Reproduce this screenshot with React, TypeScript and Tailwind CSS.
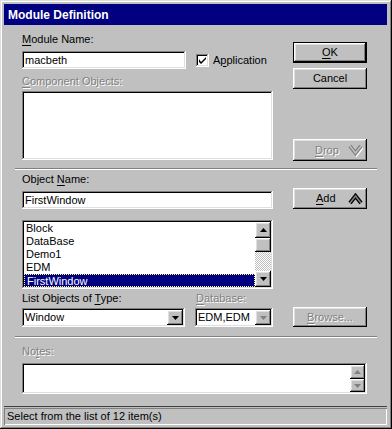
import React from 'react'

const raised =
  'shadow-[inset_-1px_-1px_#000,inset_1px_1px_#fff,inset_-2px_-2px_#808080,inset_2px_2px_#dfdfdf]'
const sunken =
  'shadow-[inset_-1px_-1px_#fff,inset_1px_1px_#808080,inset_-2px_-2px_#dfdfdf,inset_2px_2px_#000]'
const disabledText = 'text-[#808080] [text-shadow:1px_1px_0_#fff]'

function U({ children }: { children: React.ReactNode }) {
  return <span className="underline underline-offset-2">{children}</span>
}

function Chevrons({ dir, disabled }: { dir: 'up' | 'down'; disabled?: boolean }) {
  const d = dir === 'up' ? 'M2 11 L7.5 4 L13 11' : 'M2 3 L7.5 10 L13 3'
  return (
    <svg width="15" height="14" viewBox="0 0 15 14">
      {disabled && <path d={d} transform="translate(1 1)" fill="none" stroke="#fff" strokeWidth="4" />}
      <path d={d} fill="none" stroke={disabled ? '#808080' : '#000'} strokeWidth="4" />
      <path d={d} fill="none" stroke={disabled ? '#c0c0c0' : '#808080'} strokeWidth="1.4" />
    </svg>
  )
}

function Tri({ dir, color = '#000' }: { dir: 'up' | 'down'; color?: string }) {
  return (
    <svg width="7" height="4" viewBox="0 0 7 4">
      <path d={dir === 'up' ? 'M3.5 0 L7 4 L0 4 Z' : 'M0 0 L7 0 L3.5 4 Z'} fill={color} />
    </svg>
  )
}

function Combo({ value, width, disabled }: { value: string; width: string; disabled?: boolean }) {
  return (
    <div className={`${width} h-[19px] bg-white ${sunken} flex items-center p-[2px]`}>
      <span className="flex-1 pl-[1px] leading-none">{value}</span>
      <div className={`w-[16px] h-[15px] bg-[#c0c0c0] ${raised} flex items-center justify-center`}>
        <Tri dir="down" color={disabled ? '#808080' : '#000'} />
      </div>
    </div>
  )
}

export default function App() {
  const items = ['Block', 'DataBase', 'Demo1', 'EDM', 'FirstWindow']
  return (
    <div
      className="w-[392px] h-[429px] bg-[#c0c0c0] pt-[4px] pl-[4px] pr-[5px] pb-[4px] flex flex-col text-[11px] text-black shadow-[inset_-1px_-1px_#000,inset_1px_1px_#dfdfdf,inset_-2px_-2px_#808080,inset_2px_2px_#fff]"
      style={{ fontFamily: '"Liberation Sans", Arial, sans-serif' }}
    >
      <div className="h-[21px] bg-[#000080] text-white font-bold text-[12px] pl-[4px] flex items-center">
        Module Definition
      </div>

      {/* section 1 */}
      <div className="flex pl-[18px]">
        <div className="w-[251px] flex flex-col">
          <div className="mt-[8px] h-[13px] leading-[13px]">
            <U>M</U>odule Name:
          </div>
          <div className="mt-[5px] flex items-center">
            <div className={`w-[164px] h-[18px] bg-white ${sunken} pl-[3px] flex items-center leading-none`}>
              macbeth
            </div>
            <div className={`ml-[10px] w-[13px] h-[13px] bg-white ${sunken} flex items-center justify-center`}>
              <svg width="7" height="7" viewBox="0 0 7 7">
                <path d="M0 2 L0 5 L2 7 L7 2 L7 0 L2 5 Z" fill="#000" />
              </svg>
            </div>
            <span className="ml-[4px]">
              A<U>p</U>plication
            </span>
          </div>
          <div className={`mt-[6px] h-[13px] leading-[13px] ${disabledText}`}>
            <U>C</U>omponent Objects:
          </div>
          <div className={`mt-[3px] h-[69px] bg-white ${sunken}`} />
        </div>
        <div className="ml-[20px] w-[74px] flex flex-col">
          <button
            className={`mt-[17px] h-[21px] bg-[#c0c0c0] flex items-center justify-center shadow-[inset_0_0_0_1px_#000,inset_-2px_-2px_#000,inset_2px_2px_#fff,inset_-3px_-3px_#808080,inset_3px_3px_#dfdfdf]`}
          >
            <U>O</U>K
          </button>
          <button className={`mt-[5px] h-[21px] bg-[#c0c0c0] ${raised} flex items-center justify-center`}>
            Cancel
          </button>
          <button className={`mt-[50px] h-[22px] bg-[#c0c0c0] ${raised} flex items-center pl-[22px] pr-[4px]`}>
            <span className={`flex-1 text-left ${disabledText}`}>
              <U>D</U>rop
            </span>
            <Chevrons dir="down" disabled />
          </button>
        </div>
      </div>

      <div className="mt-[7px] ml-[11px] w-[362px] h-[2px] border-t border-t-[#808080] border-b border-b-white" />

      {/* section 2 */}
      <div className="flex pl-[18px]">
        <div className="w-[251px] flex flex-col">
          <div className="mt-[3px] h-[13px] leading-[13px]">
            Object <U>N</U>ame:
          </div>
          <div className={`mt-[5px] h-[18px] bg-white ${sunken} pl-[3px] flex items-center leading-none`}>
            FirstWindow
          </div>
          <div className={`mt-[11px] h-[69px] bg-white ${sunken} p-[2px] flex`}>
            <div className="flex-1 flex flex-col overflow-hidden">
              {items.map((it) => (
                <div
                  key={it}
                  className={`h-[13px] leading-[12px] pl-[2px] shrink-0 ${
                    it === 'FirstWindow'
                      ? 'bg-[#000080] text-white border border-dotted border-[#ffff80] pl-[1px]'
                      : ''
                  }`}
                >
                  {it}
                </div>
              ))}
            </div>
            <div className="w-[16px] flex flex-col">
              <div className={`h-[16px] bg-[#c0c0c0] ${raised} flex items-center justify-center`}>
                <Tri dir="up" />
              </div>
              <div className={`h-[14px] bg-[#c0c0c0] ${raised}`} />
              <div className="flex-1 bg-[repeating-conic-gradient(#c0c0c0_0%_25%,#ffffff_0%_50%)] bg-[length:2px_2px]" />
              <div className={`h-[16px] bg-[#c0c0c0] ${raised} flex items-center justify-center`}>
                <Tri dir="down" />
              </div>
            </div>
          </div>
          <div className="mt-[3px] flex">
            <div className="w-[174px] h-[13px] leading-[13px]">
              List Objects of <U>T</U>ype:
            </div>
            <div className={`h-[13px] leading-[13px] ${disabledText}`}>
              <U>D</U>atabase:
            </div>
          </div>
          <div className="mt-[3px] flex">
            <Combo value="Window" width="w-[164px]" />
            <div className="ml-[10px]">
              <Combo value="EDM,EDM" width="w-[78px]" disabled />
            </div>
          </div>
        </div>
        <div className="ml-[20px] w-[74px] flex flex-col">
          <button className={`mt-[18px] h-[21px] bg-[#c0c0c0] ${raised} flex items-center pl-[23px] pr-[4px]`}>
            <span className="flex-1 text-left">
              <U>A</U>dd
            </span>
            <Chevrons dir="up" />
          </button>
          <button className={`mt-[98px] h-[20px] bg-[#c0c0c0] ${raised} flex items-center justify-center`}>
            <span className={disabledText}>
              <U>B</U>rowse...
            </span>
          </button>
        </div>
      </div>

      <div className="mt-[9px] ml-[11px] w-[362px] h-[2px] border-t border-t-[#808080] border-b border-b-white" />

      {/* notes */}
      <div className="pl-[18px] flex flex-col">
        <div className={`mt-[7px] h-[13px] leading-[13px] ${disabledText}`}>
          No<U>t</U>es:
        </div>
        <div className={`mt-[5px] w-[345px] h-[31px] bg-white ${sunken} p-[2px] flex justify-end`}>
          <div className="w-[15px] flex flex-col">
            <div className={`h-[14px] bg-[#c0c0c0] ${raised} flex items-center justify-center`}>
              <Tri dir="up" color="#808080" />
            </div>
            <div className={`h-[13px] bg-[#c0c0c0] ${raised} flex items-center justify-center`}>
              <Tri dir="down" color="#808080" />
            </div>
          </div>
        </div>
      </div>

      <div className="mt-auto border-t border-t-[#404040] pt-[1px]">
        <div className="h-[17px] pl-[3px] flex items-center shadow-[inset_1px_1px_#808080,inset_-1px_-1px_#fff]">
          Select from the list of 12 item(s)
        </div>
      </div>
    </div>
  )
}
